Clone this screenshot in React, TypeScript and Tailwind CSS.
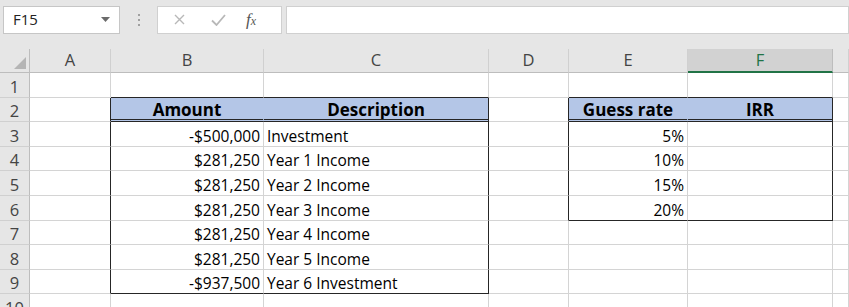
import React from "react";

const COLS = [30, 81, 153, 225, 80, 119, 145, 16];
const LETTERS = ["A", "B", "C", "D", "E", "F", ""];
const font = { fontFamily: "'Open Sans', sans-serif" };

type Cell = {
  text?: string;
  align?: "left" | "right" | "center";
  bold?: boolean;
  fill?: boolean;
  rDark?: boolean;
  bDark?: boolean;
  bDouble?: boolean;
};

const amounts = [
  ["-$500,000", "Investment"],
  ["$281,250", "Year 1 Income"],
  ["$281,250", "Year 2 Income"],
  ["$281,250", "Year 3 Income"],
  ["$281,250", "Year 4 Income"],
  ["$281,250", "Year 5 Income"],
  ["-$937,500", "Year 6 Investment"],
];
const rates = ["5%", "10%", "15%", "20%"];

function buildRow(r: number): Cell[] {
  const cells: Cell[] = Array.from({ length: 7 }, () => ({}));
  if (r === 1) {
    cells[1].bDark = true;
    cells[2].bDark = true;
    cells[4].bDark = true;
    cells[5].bDark = true;
  }
  if (r >= 2 && r <= 9) {
    cells[0].rDark = true;
    cells[2].rDark = true;
  }
  if (r >= 2 && r <= 6) {
    cells[3].rDark = true;
    cells[5].rDark = true;
  }
  if (r === 2) {
    cells[1] = { ...cells[1], text: "Amount", align: "center", bold: true, fill: true, bDouble: true };
    cells[2] = { ...cells[2], text: "Description", align: "center", bold: true, fill: true, bDouble: true };
    cells[4] = { ...cells[4], text: "Guess rate", align: "center", bold: true, fill: true, bDouble: true };
    cells[5] = { ...cells[5], text: "IRR", align: "center", bold: true, fill: true, bDouble: true };
  }
  if (r >= 3 && r <= 9) {
    const [a, d] = amounts[r - 3];
    cells[1] = { ...cells[1], text: a, align: "right" };
    cells[2] = { ...cells[2], text: d, align: "left" };
    if (r === 9) {
      cells[1].bDark = true;
      cells[2].bDark = true;
    }
  }
  if (r >= 3 && r <= 6) {
    cells[4] = { ...cells[4], text: rates[r - 3], align: "right" };
    if (r === 6) {
      cells[4].bDark = true;
      cells[5].bDark = true;
    }
  }
  return cells;
}

function GridCell({ c, w, h }: { c: Cell; w: number; h: string }) {
  const classes = [
    "box-border shrink-0 flex items-end overflow-hidden whitespace-nowrap text-black leading-[18px]",
    c.rDark
      ? "border-r border-r-[#262626]"
      : c.fill
      ? "border-r border-r-[#b4c6e7]"
      : "border-r border-r-[#d4d4d4]",
    c.bDouble
      ? "border-b-[3px] border-double border-b-[#262626] pb-0"
      : c.bDark
      ? "border-b border-b-[#262626] pb-[1px]"
      : "border-b border-b-[#d4d4d4] pb-[1px]",
    c.fill ? "bg-[#b4c6e7]" : "bg-white",
    c.bold ? "font-bold text-[17px] text-[#1a1a1a]" : "text-[15.5px]",
    c.align === "right" ? "justify-end pr-[3px]" : c.align === "center" ? "justify-center" : "justify-start pl-[3px]",
  ].join(" ");
  return (
    <div className={classes} style={{ width: w, height: h, ...font }}>
      {c.text}
    </div>
  );
}

export default function App() {
  const rows = Array.from({ length: 10 }, (_, i) => i + 1);
  return (
    <div className="w-[849px] h-[307px] overflow-hidden bg-[#e6e6e6] select-none" style={font}>
      {/* Formula bar */}
      <div className="flex items-center h-[49px] pt-[1px] pb-[11px]">
        <div className="ml-[3px] w-[117px] h-[28px] bg-white border border-[#c6c6c6] flex items-center justify-between pl-[9px] pr-[9px]">
          <span className="text-[15px] text-[#222]" style={{ fontFamily: "'Open Sans', sans-serif" }}>F15</span>
          <svg width="9" height="5" viewBox="0 0 9 5"><path d="M0 0h9L4.5 5z" fill="#6b6b6b" /></svg>
        </div>
        <div className="w-[37px] flex flex-col items-center justify-center gap-[3px]">
          <span className="w-[2px] h-[2px] bg-[#a0a0a0]" />
          <span className="w-[2px] h-[2px] bg-[#a0a0a0]" />
          <span className="w-[2px] h-[2px] bg-[#a0a0a0]" />
        </div>
        <div className="w-[125px] h-[28px] bg-white border border-[#d0d0d0] flex items-center">
          <svg className="ml-[16px]" width="11" height="11" viewBox="0 0 11 11">
            <path d="M1 1l9 9M10 1l-9 9" stroke="#b8b8b8" strokeWidth="1.4" />
          </svg>
          <svg className="ml-[26px]" width="15" height="12" viewBox="0 0 15 12">
            <path d="M1 6.5l4.5 4.5 8.5-10" stroke="#b8b8b8" strokeWidth="1.8" fill="none" />
          </svg>
          <span
            className="ml-[20px] text-[17px] italic text-[#555]"
            style={{ fontFamily: "'Liberation Serif', serif" }}
          >
            f<span className="text-[12px]">x</span>
          </span>
        </div>
        <div className="ml-[4px] flex-1 h-[28px] bg-white border border-[#d0d0d0]" />
      </div>

      {/* Column headers */}
      <div className="flex h-[24px]">
        <div
          className="box-border shrink-0 relative border-r border-b border-[#bdbdbd] bg-[#e6e6e6]"
          style={{ width: COLS[0] }}
        >
          <svg className="absolute right-[3px] bottom-[3px]" width="12" height="12" viewBox="0 0 12 12">
            <path d="M12 0V12H0z" fill="#b5b5b5" />
          </svg>
        </div>
        {LETTERS.map((l, i) => {
          const sel = l === "F";
          return (
            <div
              key={i}
              className={
                "box-border shrink-0 flex items-center justify-center text-[16.5px] " +
                (sel
                  ? "bg-[#d2d2d2] text-[#217346] border-b-2 border-b-[#217346] border-r border-r-[#bdbdbd]"
                  : "bg-[#e6e6e6] text-[#444] border-b border-b-[#bdbdbd] border-r border-r-[#d0d0d0]")
              }
              style={{ width: COLS[i + 1], fontFamily: "'Open Sans', sans-serif" }}
            >
              {l}
            </div>
          );
        })}
      </div>

      {/* Rows */}
      {rows.map((r) => {
        const cells = buildRow(r);
        const h = "24.6px";
        return (
          <div key={r} className="flex">
            <div
              className="box-border shrink-0 flex items-end justify-center pb-[1px] leading-[18px] bg-[#e6e6e6] text-[#444] text-[16.5px] border-r border-r-[#bdbdbd] border-b border-b-[#d0d0d0]"
              style={{ width: COLS[0], height: h, fontFamily: "'Open Sans', sans-serif" }}
            >
              {r}
            </div>
            {cells.map((c, i) => (
              <GridCell key={i} c={c} w={COLS[i + 1]} h={h} />
            ))}
          </div>
        );
      })}
    </div>
  );
}
